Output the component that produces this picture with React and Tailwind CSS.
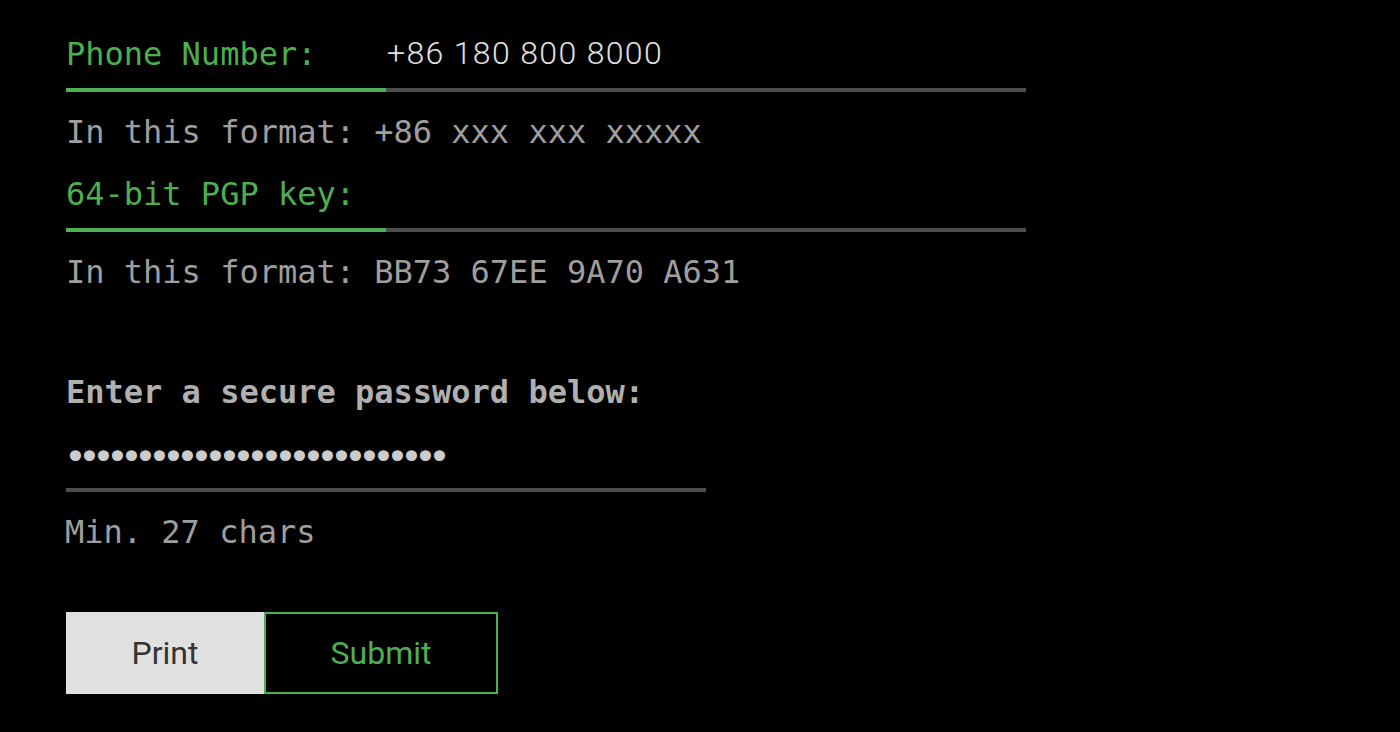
import { useState } from 'react'

const mono = "font-['DejaVu_Sans_Mono','Liberation_Mono',monospace]"
const sans = "font-['Roboto','Inter','Liberation_Sans',sans-serif]"

function Field({ label, value, hint, className = '' }) {
  return (
    <div className={className}>
      <div className="flex w-[960px]">
        <div
          className={`${mono} h-[60px] w-[320px] shrink-0 border-b-4 border-[#4caf50] pt-[2px] text-[32px] leading-[40px] text-[#4caf50]`}
        >
          {label}
        </div>
        <input
          type="text"
          defaultValue={value}
          className={`${sans} h-[60px] min-w-0 flex-1 border-b-4 border-[#4d4d4d] bg-transparent pb-[14px] pl-px text-[32px] font-light leading-[40px] tracking-[1.35px] text-[#e0e0e0] outline-none`}
        />
      </div>
      <div className={`${mono} mt-[19px] h-10 pt-[1px] text-[32px] leading-[40px] text-[#9e9e9e]`}>
        {hint}
      </div>
    </div>
  )
}

export default function App() {
  const [password, setPassword] = useState('x'.repeat(27))

  return (
    <div className="min-h-screen bg-black pl-[66px] pt-8">
      {/* Contact fields */}
      <Field label="Phone Number:" value="+86 180 800 8000" hint="In this format: +86 xxx xxx xxxxx" />
      <Field
        className="mt-[21px]"
        label="64-bit PGP key:"
        value=""
        hint="In this format: BB73 67EE 9A70 A631"
      />

      {/* Password */}
      <div
        className={`${mono} mt-20 h-10 pt-[1px] text-[32px] font-bold leading-[40px] text-[#b0b0b0]`}
      >
        Enter a secure password below:
      </div>
      <input
        type="password"
        value={password}
        onChange={(e) => setPassword(e.target.value)}
        className={`${mono} mt-5 block h-[61px] w-[640px] border-b-4 border-[#4d4d4d] bg-transparent pb-[6px] pl-0 indent-[-2px] text-[38px] leading-[40px] tracking-[-8.88px] text-[#cccccc] outline-none`}
      />
      <div className={`${mono} -ml-px mt-[19px] h-10 pt-[1px] text-[32px] leading-[40px] text-[#9e9e9e]`}>
        Min. 27 chars
      </div>

      {/* Actions */}
      <div className={`${sans} mt-[61px] flex text-[32px]`}>
        <button className="h-[82px] w-[198px] bg-[#e0e0e0] text-[#333333]">Print</button>
        <button className="h-[82px] w-[234px] border-2 border-[#4caf50] bg-black text-[#4caf50]">
          Submit
        </button>
      </div>
    </div>
  )
}
